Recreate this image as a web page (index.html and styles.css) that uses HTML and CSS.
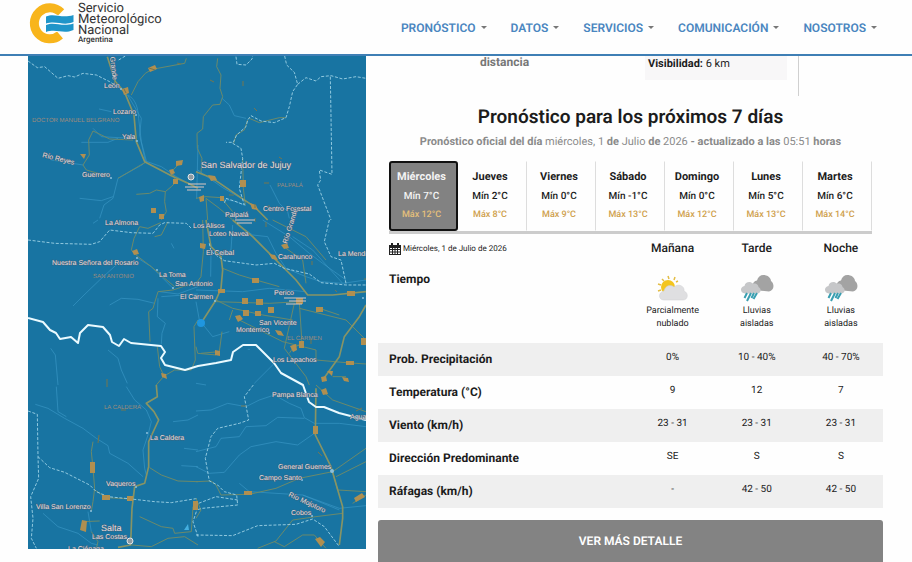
FILE: index.html
```html
<!DOCTYPE html>
<html lang="es">
<head>
<meta charset="utf-8">
<meta name="viewport" content="width=device-width, initial-scale=1">
<title>Servicio Meteorológico Nacional</title>
<link rel="stylesheet" href="styles.css">
</head>
<body>
<svg class="defs" width="0" height="0" aria-hidden="true">
  <symbol id="rain" viewBox="0 0 34 28">
    <path fill="#a3a3a3" d="M14 16C11 12 13 7 17 6.500C18 2 22 0 26 1.500C29 2 31 5 31 7C35 10 34 17 29 17.500Z"/>
    <path fill="#c6c7c9" d="M5 19.500C0 19.500-.5 13 4.500 12C5 8 10 6.500 13 9.500C17 9 18.500 11.500 18.500 13C22 15 21 19.500 17 19.500Z"/>
    <path stroke="#3a9fb1" stroke-width="2" fill="none" d="M7 19L4.500 24M11 19L7 27M14 19L11.500 24M17 19L13.500 25"/>
  </symbol>
</svg>

<header class="header">
  <a class="brand" href="#">
    <svg class="brand-mark" viewBox="0 0 46 42" aria-hidden="true">
      <path d="M33 9.500A15.500 15.500 0 1 0 32 32" fill="none" stroke="#f8b51c" stroke-width="9"/>
      <g fill="#1f95c9" stroke="#fff" stroke-width="1.500" paint-order="stroke">
        <path d="M18 13.500C27 9.500 33 16 45.500 12V19C35 23.500 29 17 18 20.500Z"/>
        <path d="M18 22C27 18 33 24.500 45.500 20.500V27C35 31.500 29 25.500 18 29Z"/>
      </g>
    </svg>
    <span class="brand-text">Servicio<br>Meteorológico<br>Nacional<small>Argentina</small></span>
  </a>
  <nav class="nav">
    <a href="#">PRONÓSTICO<i class="caret"></i></a>
    <a href="#">DATOS<i class="caret"></i></a>
    <a href="#">SERVICIOS<i class="caret"></i></a>
    <a href="#">COMUNICACIÓN<i class="caret"></i></a>
    <a href="#">NOSOTROS<i class="caret"></i></a>
  </nav>
</header>

<main class="page">
  <svg class="map" viewBox="28 56 338 493" role="img" aria-label="Mapa">
    <rect x="28" y="56" width="338" height="493" fill="#1874a2"/>
    <g class="tile" transform="translate(28 55) scale(.3333)">
      <path class="river" d="M300 120C325 135 330 160 332 190L340 260L355 318L345 328L270 370L255 430L228 450L215 490M155 430L220 437L255 425M195 220L220 245L270 248L320 250M160 262L240 262L270 250M70 315L165 330M265 90L300 122L340 190L335 240L352 318L400 335L445 365L500 395M213 162L250 170M510 270L506 430"/>
      <path class="road" d="M310 120L330 80L352 55L372 43L470 25L475 10M195 228L182 255L184 300L165 330L175 345L245 365M195 228L245 252L315 255M352 322L270 370M325 418L365 415L385 405L412 410L430 395L450 375M412 410L410 440L415 470L400 495M455 325L430 350L445 380"/>
      <path class="main-road" d="M238 5L262 80L290 112L318 180L325 260L350 320L430 362L480 385L510 400"/>
      <path class="limit" d="M0 18L28 38L50 35L90 70L120 62L140 66L165 55L205 60L245 80L268 95M272 15L292 3"/>
    </g>
    <g class="tile" transform="translate(196 55) scale(.3333)">
      <path class="road" d="M65 10L62 35L75 60L72 100L80 125L72 148L50 150L22 185L20 222L3 235L4 280L18 310L15 355M160 190L190 203L250 188L270 188M155 195L145 225L120 240L113 265M140 310L142 400L148 450M0 430L30 425L75 428L110 470M30 430L35 495M30 430L70 460L110 495"/>
      <path class="river" d="M78 130L100 150L115 182L150 190M5 345L80 398L170 450L215 495M222 390L250 445L275 470L280 490M75 430L120 440L150 452"/>
      <path class="main-road" d="M0 350L50 370L130 425L175 455L215 495"/>
      <path class="limit" d="M120 5L123 28L150 30L168 12L170 3M266 3L272 30L295 52L305 88L290 110L280 155L270 188L235 203L195 198L165 182L155 195L150 215L122 240L112 262L90 262M110 265L135 280L140 310L130 400L145 450L120 440L90 430L85 445M305 88L330 68L360 78L375 65L405 62L440 72L480 65L510 70M403 65L408 358L370 345L374 375L365 390L405 495"/>
    </g>
    <g class="tile" transform="translate(28 220) scale(.3333)">
      <path class="river" d="M270 130L215 180L165 228L135 258M330 115L370 140L400 170L435 205M245 255L280 235L330 238L380 250M395 215L450 222L510 200M400 230L510 222M390 235L388 290L412 310L402 340L400 372M68 385L82 405L90 495M240 390L270 415L280 450L298 490M430 70L438 85M195 10L210 0"/>
      <path class="road" d="M398 8L360 25L335 20L318 55L310 90L330 110L370 140L410 175L440 200M390 215L375 265L362 275L366 365M390 215L435 210L510 185M388 380L395 440L408 468L385 495M408 468L440 450L490 450L502 420L498 320L510 300M380 50L400 45L420 5"/>
      <path class="limit" d="M0 60L80 70L190 73L215 65L245 30L310 38L375 40L395 15L410 8L475 10L490 25"/>
    </g>
    <g class="tile" transform="translate(196 220) scale(.3333)">
      <path class="river" d="M120 10L170 45L215 50L240 100L270 145L330 170L375 185L440 190L510 180M200 0L280 50L340 100L380 130L450 180M0 210L140 215L220 205L330 215M45 100L44 170M110 15L105 90L75 110M290 50L350 90L440 190M0 245L10 300L50 350L100 335M0 490L30 495M155 388L162 388M235 430L175 490"/>
      <path class="road" d="M20 0L22 95L15 170L0 190M80 145L130 165L180 180L250 200M60 240L110 265L200 285L290 300M60 245L220 250L310 245M120 295L200 335L260 365L320 380L360 390L360 420L450 428L510 432M310 245L318 370L290 385L280 400M295 250L265 385L330 470L340 495M15 400L70 395L78 335M0 380L5 400L60 405M100 300L110 270M310 265L450 300L510 360M370 265L430 285M230 0L330 50L390 120M270 85L320 120L330 190M410 470L450 470"/>
      <path class="main-road" d="M110 0L170 50L230 110L270 150L300 180L335 225L410 225L510 215M30 0L45 80L75 110L80 150L75 205L60 240L15 310M510 255L490 290L445 350L430 410L380 480"/>
      <path class="limit" d="M40 70L45 95L85 122L180 135L235 130L265 145L340 162L375 188L450 195L510 195M400 0L385 65L405 110L435 120L450 190"/>
    </g>
    <g class="tile" transform="translate(28 385) scale(.3333)">
      <path class="river" d="M85 5L90 80L115 95M22 58L60 70L110 100L165 130L205 160L240 182L245 205L300 235L345 275M295 5L320 45L355 75L370 110L360 150L345 195L350 250L355 270M435 110L480 105L510 90M468 190L510 195M460 242L510 245M45 385L90 425L150 445L190 475L210 480M180 380L190 440"/>
      <path class="road" d="M195 170L190 200L195 250L200 310L195 350L190 378M200 315L235 338L310 342M365 248L400 270L450 288L510 290M335 395L400 425L435 430L440 445L490 440L495 365M165 410L215 408M190 440L210 470L205 490M310 480L370 485L420 460L470 455L510 480"/>
      <path class="main-road" d="M385 0L388 35L355 55L378 80L392 105L362 170L362 245L350 295L320 305L312 370L308 480L270 487"/>
      <path class="limit" d="M0 78L28 88L30 215L32 280L8 335L15 400L10 460L25 490M30 215L65 248L110 262L185 300L205 320L240 335L310 342L380 350L430 353L510 340M505 380L495 410L510 455"/>
    </g>
    <g class="tile" transform="translate(196 385) scale(.3333)">
      <path class="river" d="M0 78L45 75L95 55L150 65L190 45L235 30L280 55L315 70L325 98L355 115L430 115L510 125M0 200L60 185L75 160L130 155L150 125L210 122L245 97L325 100M0 245L40 265L85 262L130 210L165 185L240 170L305 180L355 145M130 295L160 320L320 330L430 370L510 362M320 330L430 375"/>
      <path class="road" d="M0 290L45 288L60 300L75 330L160 328L240 310L310 280L410 260L510 190M410 260L425 315L510 320M420 275L510 230M360 0L410 45L510 80M440 385L360 395L290 405L240 468L185 490M235 470L265 485L320 450L355 450L390 490M470 355L510 330M0 340L15 375L0 400"/>
      <path class="main-road" d="M360 10L358 150L405 245L440 365L440 400L430 480"/>
      <path class="limit" d="M172 0L145 35L158 105L130 115L65 130L45 155L28 220L40 288L65 300L85 320L122 330L125 360L20 370L0 375M125 345L60 335L0 358M0 450L110 452L185 422L300 418L350 402L385 425L430 485"/>
    </g>
    <path class="border" d="M28 318L43 322L50 330L56 333L60 339L71 337L78 343L80 333L88 325L103 327L110 335L112 342L119 346L124 339L131 343L161 346L165 352L161 358L165 365L185 370L198 366L216 363L231 360L233 352L243 345L256 345L274 363L281 373L303 385L309 402L316 407L324 407L339 413L366 420"/>
    <g class="shield">
      <path d="M148 68l7-3 2 4-7 3zM122 89l6-2 1 6-5 2zM80 154h6l-2 5zM176 161l7-1-1 5-6 1zM169 170l4-1 2 4-4 2zM173 179h5v5h-5zM151 208h5v5h-5zM159 214h5v5h-5zM208 175l7 1 2 4-6 1zM240 180h6v7h-6zM250 203l6 2 2 5-6-1zM199 197l5-2v6l-4 1zM220 196h4v5h-4zM132 251l5-2 2 5-5 1zM161 373l5 1 1 5-5-2zM200 243l6 1-1 5-5-1zM269 254l6 1 3 5-6-1zM281 245l6-2 2 5-5 1zM252 278h7v5h-7zM218 289h7v4h-7zM242 298h6v6h-6zM256 299h7v6h-7zM268 307h6v6h-6zM255 311h6v5h-6zM243 310h6v6h-6zM235 316l5-1 3 4-5 3zM275 330l6 1 3 5-6-1zM296 298h7v6h-7zM316 307h7v5h-7zM347 291h8v5h-8zM361 338h5v7h-5zM215 350l5 1v5l-5-1zM290 346l6-2 1 6-4 2zM299 341h5v7h-5zM346 361h8v4h-8zM321 377l5-1 1 5-5 1zM327 371h6l-1 5zM342 377l6 1 1 4-5-1zM90 462h5v11h-5zM102 495h8v5h-8zM127 496h6v5h-6zM82 520l5 1-1 11-6-2zM193 501h5v9h-5zM244 491h8v4h-8zM313 426h5v8h-5zM321 390l5-2 2 6-5 1zM354 498l8-5 3 4-9 5zM315 539l5-2 5 5-4 5z"/>
    </g>
    <g class="shield-lines"><path d="M149 68l6 2m-31 19l2 4m51-30l4 1m62 17v5m-33-6l4 2m40 26l3 3m22 46l3 2m-18 24h5m-40 12h5m21 9v4m14-3v5m-14 8v4m11 0v5m16 31l3 1m27 2v4m52 14h5m-34 11l2 2m-230 87v8m-8 48l-1 8m23-33h5m115-4h5m65-67v5m45 67l6-3m-44 44l4 4"/></g>
    <g stroke="#dbc8c2" stroke-width="1"><path d="M188 184h18m-21 3h19m-17 3h14M235 220h20m-18 3h15M284 298h22m-17 3h17m-20 3h16"/></g>
    <g class="city"><circle cx="191" cy="177" r="3"/><circle cx="130" cy="541" r="3"/></g>
    <circle cx="201" cy="323" r="4" fill="#1f96df"/>
    <path d="M188 524l-4 6h5z" fill="#44afe0"/>
    <g class="dots"><circle cx="121" cy="89" r="1"/><circle cx="136" cy="115" r="1"/><circle cx="137" cy="141" r="1"/><circle cx="111" cy="178" r="1"/><circle cx="137" cy="258" r="1"/><circle cx="157" cy="270" r="1"/><circle cx="173" cy="288" r="1"/><circle cx="215" cy="301" r="1"/><circle cx="147" cy="433" r="1"/><circle cx="136" cy="487" r="1"/><circle cx="91" cy="511" r="1"/><circle cx="332" cy="471" r="2"/><circle cx="302" cy="480" r="1"/><circle cx="312" cy="516" r="1"/><circle cx="363" cy="298" r="1"/><circle cx="269" cy="333" r="1"/></g>
    <g class="district">
      <text x="32" y="122">DOCTOR MANUEL BELGRANO</text><text x="277" y="187">PALPALÁ</text><text x="93" y="278">SAN ANTONIO</text><text x="287" y="340">EL CARMEN</text><text x="104" y="409">LA CALDERA</text>
    </g>
    <g class="place">
      <text x="104" y="88">León</text><text x="113" y="114">Lozano</text><text x="122" y="139">Yala</text><text x="82" y="177">Guerrero</text>
      <text transform="translate(42 157) rotate(14)">Río Reyes</text><text transform="translate(110 57) rotate(83)">Grande</text>
      <text x="225" y="217">Palpalá</text><text x="263" y="211">Centro Forestal</text><text x="105" y="225">La Almona</text><text x="193" y="228">Los Alisos</text><text x="209" y="236">Loteo Navea</text><text x="206" y="255">El Ceibal</text>
      <text transform="translate(287 244) rotate(-73)">Río Grande</text><text x="278" y="259">Carahunco</text><text x="338" y="256">La Mendieta</text>
      <text x="52" y="265">Nuestra Señora del Rosario</text><text x="159" y="277">La Toma</text><text x="175" y="286">San Antonio</text><text x="180" y="299">El Carmen</text><text x="274" y="295">Perico</text><text x="259" y="325">San Vicente</text><text x="236" y="332">Monterrico</text><text x="273" y="362">Los Lapachos</text><text x="272" y="397">Pampa Blanca</text><text x="350" y="419">Aguas</text>
      <text x="150" y="440">La Caldera</text><text x="106" y="486">Vaqueros</text><text x="36" y="509">Villa San Lorenzo</text><text x="92" y="539">Las Costas</text><text x="68" y="551">La Ciénaga</text><text x="278" y="469">General Guemes</text><text x="259" y="480">Campo Santo</text><text transform="translate(288 496) rotate(25)">Río Mojotoro</text><text x="291" y="515">Cobos</text>
      <text class="large" x="201" y="168">San Salvador de Jujuy</text><text class="large" x="101" y="531">Salta</text>
    </g>
  </svg>

  <section class="forecast">
    <div class="current">
      <p class="distance">distancia</p>
      <p class="visibility"><b>Visibilidad:</b> 6 km</p>
    </div>

    <h1>Pronóstico para los próximos 7 días</h1>
    <p class="official"><b>Pronóstico oficial del día</b> miércoles, 1 <b>de</b> Julio <b>de</b> 2026 <b>- actualizado a las</b> 05:51 <b>horas</b></p>

    <div class="days">
      <button class="day active"><b>Miércoles</b><span>Mín 7°C</span><span class="max">Máx 12°C</span></button>
      <button class="day"><b>Jueves</b><span>Mín 2°C</span><span class="max">Máx 8°C</span></button>
      <button class="day"><b>Viernes</b><span>Mín 0°C</span><span class="max">Máx 9°C</span></button>
      <button class="day"><b>Sábado</b><span>Mín -1°C</span><span class="max">Máx 13°C</span></button>
      <button class="day"><b>Domingo</b><span>Mín 0°C</span><span class="max">Máx 12°C</span></button>
      <button class="day"><b>Lunes</b><span>Mín 5°C</span><span class="max">Máx 13°C</span></button>
      <button class="day"><b>Martes</b><span>Mín 6°C</span><span class="max">Máx 14°C</span></button>
    </div>

    <table class="detail">
      <thead>
        <tr>
          <th class="date" scope="col"><span class="date-line"><svg class="calendar" viewBox="0 0 12 12" aria-hidden="true"><path fill="#222" fill-rule="evenodd" d="M0 2h2V0h2v2h4V0h2v2h2v10H0zM1 5v1h2V5zm3 0v1h1.500V5zm2.500 0v1H8V5zM9 5v1h2V5zM1 7v1.500h2V7zm3 0v1.500h1.500V7zm2.500 0v1.500H8V7zM9 7v1.500h2V7zM1 9.500V11h2V9.500zm3 0V11h1.500V9.500zm2.500 0V11H8V9.500zm2.500 0V11h2V9.500z"/></svg>Miércoles, 1 de Julio de 2026</span></th>
          <th scope="col">Mañana</th><th scope="col">Tarde</th><th scope="col">Noche</th>
        </tr>
      </thead>
      <tbody>
        <tr class="weather">
          <th scope="row">Tiempo</th>
          <td><svg viewBox="0 0 34 28" aria-hidden="true"><path stroke="#e3bd45" stroke-width="1.500" d="M2 17l3-1M2 10l3 1M6 5l2 2M12 2l1 3M19 3l-1 3M22 7l-2 1"/><circle cx="12" cy="13" r="7" fill="#f3c51f"/><path fill="#dfdfe1" stroke="#cfcfd2" stroke-width=".5" d="M8 26C2 26 2 18 8 17C9 12 14 10 18 13C22 9 29 12 28 17C33 19 32 26 27 26Z"/></svg>Parcialmente<br>nublado</td>
          <td><svg aria-hidden="true"><use href="#rain"/></svg>Lluvias<br>aisladas</td>
          <td><svg aria-hidden="true"><use href="#rain"/></svg>Lluvias<br>aisladas</td>
        </tr>
        <tr class="shaded"><th scope="row">Prob. Precipitación</th><td>0%</td><td>10 - 40%</td><td>40 - 70%</td></tr>
        <tr><th scope="row">Temperatura (°C)</th><td>9</td><td>12</td><td>7</td></tr>
        <tr class="shaded"><th scope="row">Viento (km/h)</th><td>23 - 31</td><td>23 - 31</td><td>23 - 31</td></tr>
        <tr><th scope="row">Dirección Predominante</th><td>SE</td><td>S</td><td>S</td></tr>
        <tr class="shaded"><th scope="row">Ráfagas (km/h)</th><td>-</td><td>42 - 50</td><td>42 - 50</td></tr>
      </tbody>
    </table>

    <button class="more">VER MÁS DETALLE</button>
  </section>
</main>
</body>
</html>
```
FILE: styles.css
```css
* { box-sizing: border-box; }

body {
  margin: 0;
  background: #fefefe;
  color: #1c1c1c;
  font-family: Roboto, "Liberation Sans", sans-serif;
  text-rendering: geometricPrecision;
}

p, h1 { margin: 0; }

button { font-family: inherit; text-rendering: inherit; cursor: pointer; }

.defs { position: absolute; }

/* Header */
.header {
  display: flex;
  justify-content: space-between;
  height: 56px;
  padding: 0 35px 0 28px;
  border-bottom: 2px solid #3f7fb5;
  background: #fefefe;
}

.brand {
  display: flex;
  gap: 4px;
  padding-top: 3px;
  color: #333;
  text-decoration: none;
}

.brand-mark { width: 46px; height: 42px; }

.brand-text {
  font-size: 13px;
  line-height: 11px;
}

.brand-text small {
  display: block;
  font-size: 8px;
  font-weight: 500;
  line-height: 8px;
}

.nav {
  display: flex;
  align-items: center;
  gap: 24px;
  padding-top: 1px;
}

.nav a {
  display: flex;
  align-items: center;
  gap: 5px;
  color: #4a86c0;
  font-size: 12px;
  font-weight: 600;
  text-decoration: none;
}

.caret {
  border: 3px solid transparent;
  border-top-color: #777;
  border-bottom: 0;
}

/* Two-column page */
.page {
  display: grid;
  grid-template-columns: 338fr 505fr;
  gap: 12px;
  align-items: start;
  padding: 0 29px 0 28px;
}

/* Map */
.map {
  display: block;
  width: 100%;
  height: auto;
  font-family: "Liberation Sans", Arial, sans-serif;
}

.tile path, .border { fill: none; stroke-linejoin: round; }
.river { stroke: #3a97c6; stroke-width: 2; }
.road { stroke: #6b8a6a; stroke-width: 3; }
.main-road { stroke: #879465; stroke-width: 5; }
.limit { stroke: #91c9df; stroke-width: 3; stroke-dasharray: 9 5; }
.border { stroke: #eafaff; stroke-width: 2; }
.shield { fill: #b08f50; }
.shield-lines { fill: none; stroke: #75764f; stroke-width: 1; }
.city { fill: #8e9ba3; stroke: #e3e6e8; stroke-width: 1; }
.dots { fill: #8cc0dc; }
.place { fill: #e9dfdf; stroke: #3b6580; stroke-width: 1; paint-order: stroke; font-size: 7px; }
.place .large { font-size: 9px; }
.district { fill: #a08c7c; font-size: 6px; }

/* Forecast */
.current {
  display: grid;
  grid-template-columns: 1fr 142px;
  align-items: start;
  width: 421px;
  max-width: 100%;
  height: 40px;
  padding-right: 11px;
  border-right: 1px solid #d0d0d0;
}

.distance {
  padding-right: 14px;
  color: #777;
  font-size: 12px;
  font-weight: 700;
  line-height: 12px;
  text-align: center;
}

.visibility {
  height: 24px;
  padding-left: 3px;
  background: #f8f7f8;
  font-size: 11px;
  line-height: 16px;
}

h1 {
  margin-top: 8px;
  font-size: 19px;
  font-weight: 600;
  line-height: 26px;
  text-align: center;
}

.official {
  padding-top: 4px;
  color: #8a8a8a;
  font-size: 11px;
  line-height: 16px;
  text-align: center;
}

.days {
  display: grid;
  grid-template-columns: repeat(7, 1fr);
  margin: 11px 11px 0;
  border-bottom: 3px solid #ccc;
}

.day {
  display: flex;
  flex-direction: column;
  align-items: center;
  height: 70px;
  padding: 4px 5px 0 0;
  border: 1px solid transparent;
  border-right-color: #ddd;
  background: none;
  color: #1c1c1c;
  font-size: 10px;
  font-weight: 500;
  line-height: 18px;
}

.day b { font-size: 11px; font-weight: 700; line-height: 22px; }

.day .max { color: #cfa04c; font-size: 9px; }

.day.active {
  padding: 3px 4px 0 0;
  border: 2px solid #111;
  border-radius: 3px;
  background: #828282;
  color: #f4f4f4;
}

.day.active .max { color: #e5c07a; }

/* Detail table */
.detail {
  width: 100%;
  table-layout: fixed;
  border-collapse: collapse;
}

.detail th, .detail td {
  height: 33px;
  padding: 6px 0;
  font-size: 10px;
  line-height: 17px;
  text-align: center;
  vertical-align: top;
}

.detail thead th {
  height: 28px;
  padding-bottom: 5px;
  font-size: 12px;
  font-weight: 500;
}

.detail tbody th {
  padding-left: 11px;
  font-size: 12px;
  font-weight: 700;
  line-height: 20px;
  text-align: left;
}

.detail thead .date {
  width: 50%;
  padding-left: 11px;
  font-size: 8px;
  font-weight: 400;
  text-align: left;
}

.date-line {
  display: flex;
  align-items: center;
  gap: 2px;
}

.calendar {
  width: 12px;
  height: 12px;
}

.detail .weather th, .detail .weather td { height: 81px; }

.detail .weather th { padding-top: 7px; }

.detail .weather td {
  padding-top: 12px;
  font-size: 9px;
  line-height: 13px;
}

.weather svg {
  display: block;
  width: 34px;
  height: 28px;
  margin: 0 auto 3px;
}

.shaded { background: #efefef; }

.more {
  display: block;
  width: 100%;
  height: 42px;
  margin-top: 12px;
  border: 0;
  border-radius: 3px 3px 0 0;
  background: #838383;
  color: #fff;
  font-size: 12px;
  font-weight: 600;
}
```
